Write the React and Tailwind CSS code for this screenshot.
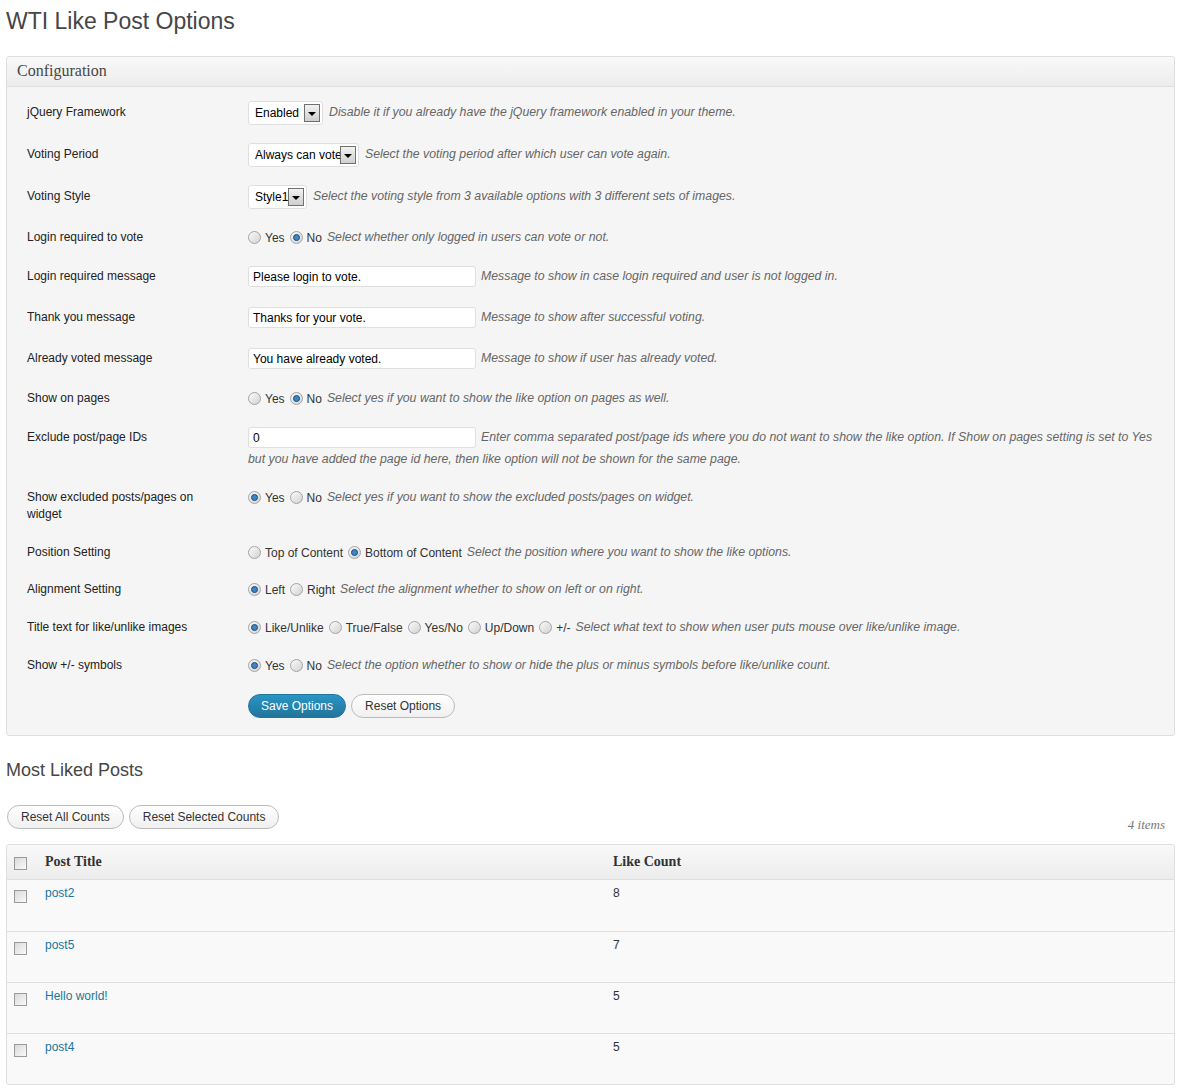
import React from "react";

const sans = "font-['Liberation_Sans',Arial,sans-serif]";
const serif = "font-['Liberation_Serif',Georgia,serif]";

function Select({ value, w }) {
  return (
    <span className="inline-flex h-[24px] items-center align-middle border border-[#dfdfdf] rounded-[3px] bg-white pl-[6px] pr-[2px] mr-[6px] text-[12px] text-black">
      <span className={`${w} whitespace-nowrap leading-[16px]`}>{value}</span>
      <span className="flex h-[18px] w-[16px] items-center justify-center border border-[#707070] bg-linear-to-b from-[#f2f2f2] to-[#cfcfcf]">
        <span className="mt-[2px] h-0 w-0 border-x-[4px] border-t-[4px] border-x-transparent border-t-black" />
      </span>
    </span>
  );
}

function Radio({ checked }) {
  return (
    <span className="inline-flex h-[13px] w-[13px] items-center justify-center rounded-full border border-[#a3a3a3] bg-linear-to-br from-[#fbfbfb] to-[#d2d2d2] align-middle">
      {checked && (
        <span className="h-[7px] w-[7px] rounded-full border border-[#24496d] bg-[#3a86c8]" />
      )}
    </span>
  );
}

function Radios({ options }) {
  return (
    <>
      {options.map((o) => (
        <span key={o.label} className="mr-[5px] inline-flex items-center align-middle">
          <Radio checked={o.checked} />
          <span className="ml-[4px] leading-[16px] text-[#333]">{o.label}</span>
        </span>
      ))}
    </>
  );
}

function TextInput({ value }) {
  return (
    <span className="inline-flex h-[21px] w-[228px] items-center align-middle border border-[#dfdfdf] rounded-[3px] bg-white pl-[4px] mr-[5px] text-[12px] text-black">
      {value}
    </span>
  );
}

function Checkbox() {
  return (
    <span className="block h-[13px] w-[13px] border border-[#9a9a9a] bg-linear-to-br from-[#d9d9d9] to-[#fafafa]" />
  );
}

function Button({ children, primary }) {
  return (
    <button
      className={
        primary
          ? "h-[24px] rounded-[12px] border border-[#21759b] bg-linear-to-b from-[#2a95c5] to-[#21759b] px-[12px] text-[12px] text-white"
          : "h-[24px] rounded-[12px] border border-[#bbbbbb] bg-linear-to-b from-[#ffffff] to-[#f0f0f0] px-[13px] text-[12px] text-[#333]"
      }
    >
      {children}
    </button>
  );
}

const rows = [
  {
    label: "jQuery Framework",
    h: "h-[42px]",
    control: <Select value="Enabled" w="w-[49px]" />,
    desc: "Disable it if you already have the jQuery framework enabled in your theme.",
  },
  {
    label: "Voting Period",
    h: "h-[42px]",
    control: <Select value="Always can vote" w="w-[85px]" />,
    desc: "Select the voting period after which user can vote again.",
  },
  {
    label: "Voting Style",
    h: "h-[41px]",
    control: <Select value="Style1" w="w-[33px]" />,
    desc: "Select the voting style from 3 available options with 3 different sets of images.",
  },
  {
    label: "Login required to vote",
    h: "h-[39px]",
    control: <Radios options={[{ label: "Yes" }, { label: "No", checked: true }]} />,
    desc: "Select whether only logged in users can vote or not.",
  },
  {
    label: "Login required message",
    h: "h-[41px]",
    control: <TextInput value="Please login to vote." />,
    desc: "Message to show in case login required and user is not logged in.",
  },
  {
    label: "Thank you message",
    h: "h-[41px]",
    control: <TextInput value="Thanks for your vote." />,
    desc: "Message to show after successful voting.",
  },
  {
    label: "Already voted message",
    h: "h-[40px]",
    control: <TextInput value="You have already voted." />,
    desc: "Message to show if user has already voted.",
  },
  {
    label: "Show on pages",
    h: "h-[39px]",
    control: <Radios options={[{ label: "Yes" }, { label: "No", checked: true }]} />,
    desc: "Select yes if you want to show the like option on pages as well.",
  },
  {
    label: "Exclude post/page IDs",
    h: "h-[60px]",
    control: <TextInput value="0" />,
    desc: "Enter comma separated post/page ids where you do not want to show the like option. If Show on pages setting is set to Yes but you have added the page id here, then like option will not be shown for the same page.",
  },
  {
    label: "Show excluded posts/pages on widget",
    h: "h-[55px]",
    control: <Radios options={[{ label: "Yes", checked: true }, { label: "No" }]} />,
    desc: "Select yes if you want to show the excluded posts/pages on widget.",
  },
  {
    label: "Position Setting",
    h: "h-[37px]",
    control: (
      <Radios options={[{ label: "Top of Content" }, { label: "Bottom of Content", checked: true }]} />
    ),
    desc: "Select the position where you want to show the like options.",
  },
  {
    label: "Alignment Setting",
    h: "h-[38px]",
    control: <Radios options={[{ label: "Left", checked: true }, { label: "Right" }]} />,
    desc: "Select the alignment whether to show on left or on right.",
  },
  {
    label: "Title text for like/unlike images",
    h: "h-[38px]",
    control: (
      <Radios
        options={[
          { label: "Like/Unlike", checked: true },
          { label: "True/False" },
          { label: "Yes/No" },
          { label: "Up/Down" },
          { label: "+/-" },
        ]}
      />
    ),
    desc: "Select what text to show when user puts mouse over like/unlike image.",
  },
  {
    label: "Show +/- symbols",
    h: "h-[41px]",
    control: <Radios options={[{ label: "Yes", checked: true }, { label: "No" }]} />,
    desc: "Select the option whether to show or hide the plus or minus symbols before like/unlike count.",
  },
];

const posts = [
  { title: "post2", count: 8 },
  { title: "post5", count: 7 },
  { title: "Hello world!", count: 5 },
  { title: "post4", count: 5 },
];

export default function App() {
  return (
    <div className={`${sans} min-h-screen bg-white px-[6px] text-[#333]`}>
      <h2 className="pt-[7px] text-[23px] leading-[29px] text-[#464646]">WTI Like Post Options</h2>

      {/* configuration panel */}
      <div className="mt-[20px] rounded-[3px] border border-[#dfdfdf] bg-[#f5f5f5]">
        <div
          className={`${serif} flex h-[30px] items-center rounded-t-[3px] border-b border-[#dfdfdf] bg-linear-to-b from-[#f9f9f9] to-[#ececec] pl-[10px] pb-[1px] text-[16px] text-[#464646]`}
        >
          Configuration
        </div>
        <div className="pl-[20px] pt-[5px]">
          {rows.map((row) => (
            <div key={row.label} className={`flex ${row.h}`}>
              <div className="w-[221px] shrink-0 pr-[21px] pt-[12px] text-[12px] leading-[17px] text-[#222]">
                {row.label}
              </div>
              <div className="min-w-0 flex-1 pr-[16px] pt-[9px] text-[12px] leading-[22px]">
                {row.control}
                <span className="text-[12.3px] italic text-[#666]">{row.desc}</span>
              </div>
            </div>
          ))}
          <div className="flex pb-[17px] pt-[8px]">
            <div className="w-[221px] shrink-0" />
            <div className="flex gap-[5px]">
              <Button primary>Save Options</Button>
              <Button>Reset Options</Button>
            </div>
          </div>
        </div>
      </div>

      {/* most liked posts */}
      <h2 className="mt-[22px] text-[18px] leading-[24px] text-[#464646]">Most Liked Posts</h2>
      <div className="mt-[23px] flex h-[24px] items-start justify-between">
        <div className="flex gap-[5px] pl-[1px]">
          <Button>Reset All Counts</Button>
          <Button>Reset Selected Counts</Button>
        </div>
        <span className={`${serif} mt-[12px] pr-[10px] text-[13px] italic leading-[16px] text-[#777]`}>4 items</span>
      </div>

      <div className="mt-[15px] rounded-[3px] border border-[#dfdfdf] bg-[#f9f9f9]">
        <div className="grid h-[35px] grid-cols-[31px_568px_1fr] items-center rounded-t-[3px] border-b border-[#dfdfdf] bg-linear-to-b from-[#f9f9f9] to-[#ececec]">
          <div className="pl-[7px] pt-[2px]">
            <Checkbox />
          </div>
          <div className={`${serif} pl-[7px] pb-[1px] text-[14px] font-bold text-[#333]`}>Post Title</div>
          <div className={`${serif} pl-[7px] pb-[1px] text-[14px] font-bold text-[#333]`}>Like Count</div>
        </div>
        {posts.map((p, i) => (
          <div
            key={p.title}
            className={`grid h-[51px] grid-cols-[31px_568px_1fr] ${i > 0 ? "border-t border-[#dfdfdf]" : ""}`}
          >
            <div className="pl-[7px] pt-[10px]">
              <Checkbox />
            </div>
            <div className="pl-[7px] pt-[5px] text-[12px] leading-[16px] text-[#21759b]">{p.title}</div>
            <div className="pl-[7px] pt-[5px] text-[12px] leading-[16px] text-[#333]">{p.count}</div>
          </div>
        ))}
      </div>
    </div>
  );
}
